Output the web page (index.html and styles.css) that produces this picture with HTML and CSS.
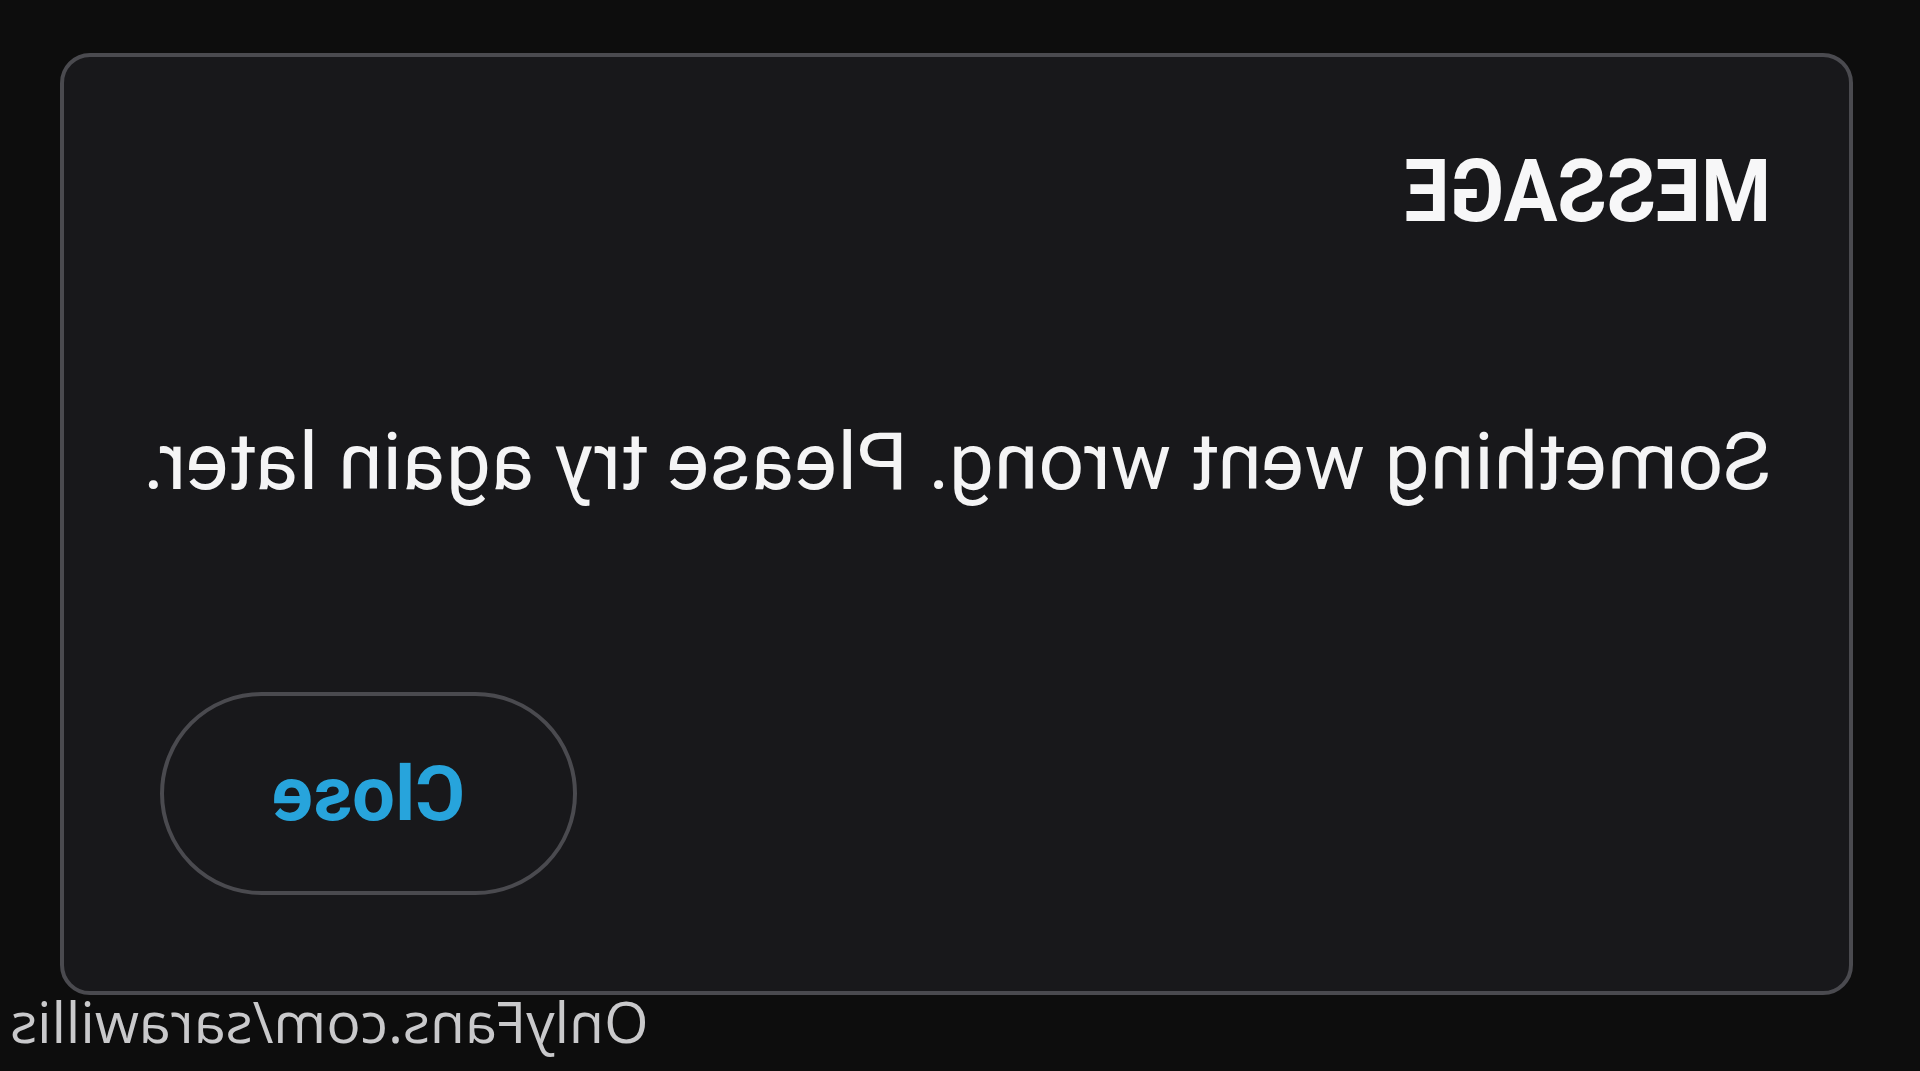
FILE: index.html
```html
<!DOCTYPE html>
<html lang="en">
<head>
    <meta charset="UTF-8">
    <meta name="viewport" content="width=device-width, initial-scale=1.0">
    <title>Message</title>
    <link rel="stylesheet" href="styles.css">
</head>
<body>
    <div class="screen">
        <div class="dialog">
            <h1 class="dialog-title">MESSAGE</h1>
            <p class="dialog-text">Something went wrong. Please try again later.</p>
            <div class="dialog-actions">
                <button class="btn-close">Close</button>
            </div>
        </div>
        <div class="watermark">OnlyFans.com/sarawillis</div>
    </div>
</body>
</html>
```

FILE: styles.css
```css
* {
    margin: 0;
    padding: 0;
    box-sizing: border-box;
}

html, body {
    width: 1920px;
    height: 1071px;
    overflow: hidden;
    background: #0d0d0d;
}

body {
    font-family: Roboto, 'Liberation Sans', Arial, sans-serif;
    color: #f4f4f5;
}

/* the whole capture is mirrored */
.screen {
    position: relative;
    width: 1920px;
    height: 1071px;
    padding: 53px 60px 0 67px;
    transform: scaleX(-1);
}

.dialog {
    width: 1793px;
    height: 942px;
    background: #18181b;
    border: 4px solid #4a4a4f;
    border-radius: 30px;
    padding: 92px 96px 0 78px;
    display: flex;
    flex-direction: column;
}

.dialog-title {
    font-size: 80px;
    line-height: 1;
    font-weight: 700;
    color: #f7f7f8;
    transform: scaleY(1.08);
    transform-origin: left top;
}

.dialog-text {
    margin-top: 193px;
    font-size: 80.4px;
    line-height: 1;
    font-weight: 400;
    white-space: nowrap;
    color: #f4f4f5;
}

.dialog-actions {
    margin-top: 190px;
    display: flex;
    justify-content: flex-end;
}

.btn-close {
    width: 417px;
    height: 203px;
    border: 4px solid #4a4a4f;
    border-radius: 102px;
    background: transparent;
    font-family: Roboto, 'Liberation Sans', Arial, sans-serif;
    font-size: 76px;
    font-weight: 700;
    color: #27a4dc;
}

.watermark {
    position: absolute;
    right: 10px;
    top: 993px;
    font-family: 'Open Sans', 'DejaVu Sans', sans-serif;
    font-size: 57px;
    line-height: 1;
    color: #c9c9cb;
}
```
